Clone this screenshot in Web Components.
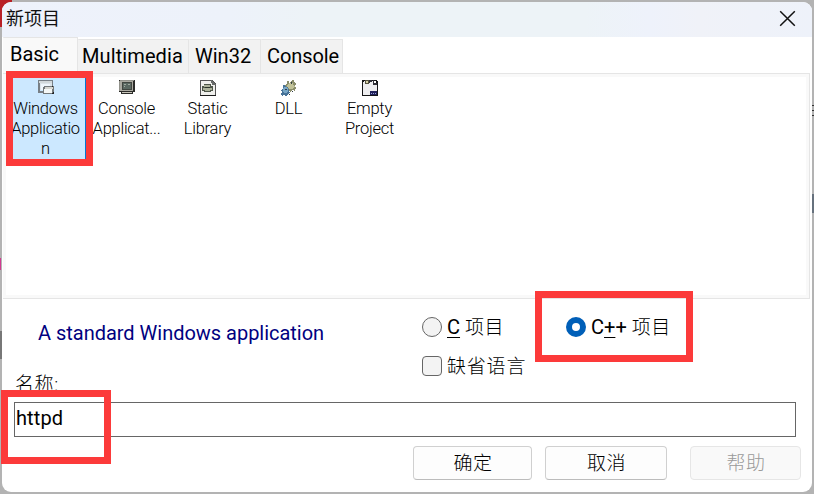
<!DOCTYPE html>
<html lang="zh-CN">
<head>
<meta charset="utf-8">
<title>新项目</title>
<style>
html,body{margin:0;width:814px;height:494px;overflow:hidden}
body{font-family:Roboto,"Noto Sans CJK SC",sans-serif;font-size:20px;color:#000}
</style>
</head>
<body>
<project-dialog></project-dialog>
<script>
const define = (name, html, after) => customElements.define(name, class extends HTMLElement {
  connectedCallback() {
    if (this.shadowRoot) return;
    const t = document.createElement('template');
    t.innerHTML = html;
    this.attachShadow({mode: 'open'}).append(t.content.cloneNode(true));
    if (after) after(this, this.shadowRoot);
  }
});

define('title-bar', `<style>
:host{display:flex;justify-content:space-between;height:35px;background:linear-gradient(90deg,#eef2fb 0,#edf2fa 28%,#edf3f7 38%,#edf3f7 72%,#eef2fb 80%,#f0f2f8 86%,#eef2fa 100%);box-sizing:border-box;padding:0 16px 0 4px}
span{font:18px/31px "Noto Sans CJK SC",sans-serif;color:#111}
svg{margin-top:8px;width:17px;height:17px}
</style><span><slot></slot></span><svg viewBox="0 0 17 17"><path d="M1.2 1.2 15.8 15.8M15.8 1.2 1.2 15.8" stroke="#111" stroke-width="1.5" fill="none"/></svg>`);

define('tab-item', `<style>
:host{display:block;box-sizing:border-box;width:var(--w);height:34px;border:solid #e5e5e5;border-width:1px 1px 0 0;background:#f2f2f2;padding-left:var(--p,4px);line-height:33px;letter-spacing:var(--ls,0);white-space:nowrap;border-radius:1px 1px 0 0}
:host([active]){height:36px;background:#f9f9f9;line-height:33px}
</style><slot></slot>`);

define('tab-strip', `<style>
:host{display:flex;align-items:flex-end;height:36px;background:#fff;padding-left:1px}
</style><slot></slot>`);

const icons = {
  window: `<path d="M0 0h15v11h-2V4H2v7h4v2H0z" fill="#777f86"/><path d="M1 1h13v2H1z" fill="#d2d8da"/><path d="M2 3h12v7H2z" fill="#dce4e9"/><path d="M3 4h9v6H3z" fill="#eff6fb"/><path d="M6 6h10v8H5V8z" fill="#74797b"/><path d="M7 7h8v2H7z" fill="#d6d6d0"/><path d="M6 9h8v4H6z" fill="#f5f8f7"/><path d="M14 6h1v1h-1zM15 12h1v2h-2z" fill="#222"/>`,
  console: `<path d="M0 0h16v12h-2v2H2v-2H0z" fill="#2b2b29"/><path d="M1 0h14v1H1zM0 1h1v10H0z" fill="#92928b"/><path d="M1 1h13v10H1z" fill="#aaa9a0"/><path d="M3 2h10v8H3z" fill="#414640"/><path d="M4 3h8v6H4z" fill="#5a6861"/><path d="M5 4h2v1H5zM9 4h2v1H9zM5 6h1v1H5z" fill="#a1aaa0"/><path d="M3 12h10v1H3z" fill="#c8c5b9"/>`,
  library: `<path d="M0 0h12l4 4v12H0z" fill="#555"/><path d="M1 1h10l4 4v10H1z" fill="#f0f0ed"/><path d="M11 0 16 5h-4z" fill="#686b6a"/><path d="M4 4h7v2h2v5h-2v1H4v-1H2V6h2z" fill="#4e5649"/><path d="M4 5h6v2H4zM3 8h9v2H3zM5 10h5v1H5z" fill="#adb39b"/><path d="M5 7h5v1H5z" fill="#2d342b"/><path d="M0 15h16v1H0z" fill="#1c1c1c"/>`,
  dll: `<path d="M6 1h2v2l2-1 1-2h2v2l2 1v2l-2 1 2 2-1 3-3-1-1 2-3-1-2-3-1-3 2-1z" fill="#8b8e6b"/><path d="M8 3h4v2l2 1-2 3H9L6 7V5z" fill="#c1c298"/><path d="M2 5h2l1 2h2l1 3-1 1 2 2-2 1-1 2H4l-1-1-2 1-1-3 1-1-1-2 2-1z" fill="#477399"/><path d="M3 7h2l2 2v2l-2 2H3l-1-3z" fill="#77a6c6"/><path d="M10 2h1v2h-1zM4 9h2v1H4zM11 11h1v1h-1zM8 14h1v1H8z" fill="#344049"/>`,
  empty: `<path d="M0 0h14l2 2v14H0z" fill="#151517"/><path d="M1 2h1V1h9v4h4v10H1z" fill="#eeeef0"/><path d="M3 0h4v4H3z" fill="#55533f"/><path d="M4 1h2v2H4z" fill="#d6d0a8"/><path d="M7 0h3v2H8v1H7zM11 0h1v3h3v2h-4z" fill="#303038"/><path d="M12 1h2v2h-2z" fill="#fff"/><path d="M8 11h7v4H8z" fill="#20205b"/><path d="M9 13h1v1H9zM11 13h1v1h-1zM13 13h1v1h-1z" fill="#9aa4d5"/>`
};
define('template-item', `<style>
:host{display:flex;flex-direction:column;align-items:center;box-sizing:border-box;width:81px;height:82px;padding-top:2px;font-weight:300;font-size:16.5px;line-height:20px;text-align:center;letter-spacing:var(--ls,-.25px)}
:host([selected]){background:linear-gradient(#0078d7,#0078d7) 80px 0/1px 100% no-repeat,linear-gradient(#cce8ff,#cce8ff) 7px 0/73px 100% no-repeat;}
svg{width:16px;height:16px;display:block;flex:none;margin-bottom:3px}
div{white-space:pre}
</style><svg viewBox="0 0 16 16" shape-rendering="crispEdges"></svg><div><slot></slot></div>`,
(h, r) => { r.querySelector('svg').innerHTML = icons[h.getAttribute('icon')]; });

define('template-list', `<style>
:host{display:flex;box-sizing:border-box;height:226px;margin-right:2px;background:#fff;border:solid #e5e5e5;border-width:1px 1px 1px 0;box-shadow:inset 0 0 0 3px #f9f9f9;padding:4px 0 0 2px}
</style><slot></slot>`);

define('choice-control', `<style>
:host{display:flex;align-items:center;gap:5px;height:24px;line-height:24px;white-space:pre;letter-spacing:var(--ls,0)}
i{box-sizing:border-box;width:20px;height:20px;border:1px solid #666;background:#f3f3f3;border-radius:50%;flex:none}
:host([square]) i{border-radius:4px}
:host([checked]) i{border:6px solid #005fb8;background:#fff}
</style><i></i><span><slot></slot></span>`);

define('push-button', `<style>
:host{display:block;box-sizing:border-box;width:var(--w);height:34px;border:1px solid #d0d0d0;border-bottom-color:#bcbcbc;border-radius:4px;background:#fdfdfd;text-align:center;text-indent:1px;line-height:34px;font-size:19px;letter-spacing:.5px;font-weight:300}
:host([disabled]){border-color:#e6e6e6;background:#f9f9f9;color:#999}
</style><slot></slot>`);

define('text-field', `<style>
:host{display:block;box-sizing:border-box;width:782px;height:35px;border:1px solid #666;background:#fff;padding-left:1px;line-height:31px;letter-spacing:.1px}
</style><slot></slot>`);

define('red-frame', `<style>
:host{position:absolute;box-sizing:border-box;border:7px solid #fc3a3a}
</style>`);

define('project-dialog', `<style>
:host{display:block;position:relative;width:814px;height:494px;box-sizing:border-box;padding:2px;
background:linear-gradient(#b82025,#b82025) 0 0/12px 12px no-repeat,linear-gradient(#b82025,#b82025) 0 12px/2px 15px no-repeat,linear-gradient(#d13b91,#d13b91) 0 258px/1px 12px no-repeat,linear-gradient(#777,#777) 0 331px/2px 28px no-repeat,linear-gradient(#333,#333) 812px 105px/2px 1px no-repeat,linear-gradient(#333,#333) 812px 110px/2px 1px no-repeat,linear-gradient(#333,#333) 812px 115px/2px 1px no-repeat,linear-gradient(#66717d,#66717d) 812px 194px/2px 19px no-repeat,#b3b3b3}
main{width:810px;height:490px;border-radius:9px;overflow:hidden;background:#fff}
.form{display:grid;grid-template-columns:384px 126px 1fr;padding:0 0 0 36px;margin-top:16px;height:64px;align-content:start;row-gap:15px}
.desc{grid-row:1/3;color:#000080;line-height:36px;letter-spacing:-.02px}
.th{font-weight:300;font-size:19px;letter-spacing:.5px}
choice-control[square]{grid-column:2/4}
choice-control[square] .th{letter-spacing:.8px}
label{display:block;height:24px;line-height:24px;margin:-6px 0 5px 13px;font-weight:300;font-size:19px;letter-spacing:.6px}
text-field{margin-left:12px}
footer{display:flex;margin:9px 0 0 411px}
u{text-underline-offset:3px;text-decoration-thickness:1px}
</style>
<main>
<title-bar>新项目</title-bar>
<tab-strip><tab-item active style="--w:75px;--p:7px">Basic</tab-item><tab-item style="--w:111px;--ls:.1px">Multimedia</tab-item><tab-item style="--w:72px;--p:6px">Win32</tab-item><tab-item style="--w:82px;--p:6px;--ls:-.1px">Console</tab-item></tab-strip>
<template-list style="margin-left:1px"><template-item icon="window" selected style="--ls:-.3px">Windows
Applicatio
n</template-item><template-item icon="console">Console
Applicat...</template-item><template-item icon="library">Static
Library</template-item><template-item icon="dll">DLL</template-item><template-item icon="empty">Empty
Project</template-item></template-list>
<div class="form"><div class="desc">A standard Windows application</div>
<choice-control><u>C</u> <span class="th">项目</span></choice-control>
<choice-control checked style="margin-left:18px">C<u>+</u>+ <span class="th">项目</span></choice-control>
<choice-control square><span class="th">缺省语言</span></choice-control></div>
<label>名称:</label>
<text-field>httpd</text-field>
<footer><push-button style="--w:119px">确定</push-button><push-button style="--w:122px;margin-left:13px">取消</push-button><push-button disabled style="--w:111px;margin-left:23px">帮助</push-button></footer>
</main>
<red-frame style="left:6px;top:71px;width:87px;height:95px"></red-frame>
<red-frame style="left:535px;top:291px;width:158px;height:71px"></red-frame>
<red-frame style="left:1px;top:390px;width:110px;height:74px"></red-frame>`);
</script>
</body>
</html>
